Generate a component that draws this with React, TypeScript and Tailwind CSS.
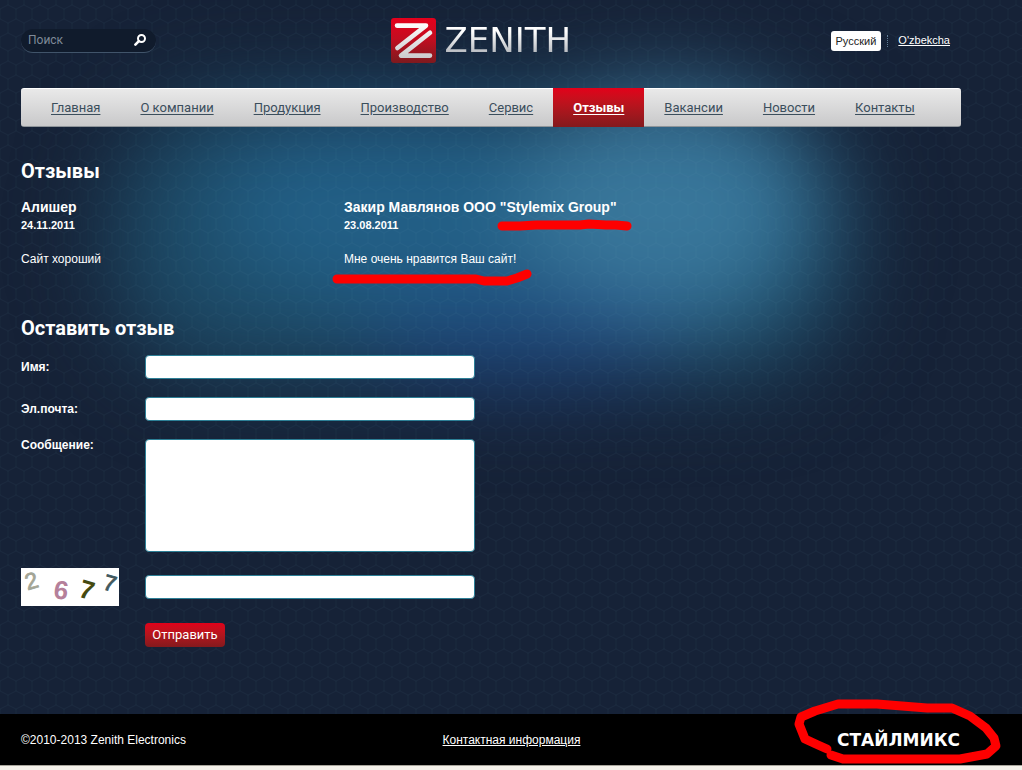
import React from 'react';

const NAV_ITEMS = [
  { label: 'Главная', active: false },
  { label: 'О компании', active: false },
  { label: 'Продукция', active: false },
  { label: 'Производство', active: false },
  { label: 'Сервис', active: false },
  { label: 'Отзывы', active: true },
  { label: 'Вакансии', active: false },
  { label: 'Новости', active: false },
  { label: 'Контакты', active: false },
];

const INPUT_CLASS =
  'w-full max-w-[330px] rounded-[4px] border border-[#2c7f96] bg-white px-2 text-xs text-gray-900 outline-none';

const Backdrop: React.FC = () => (
  <svg className="absolute inset-0 -z-10 h-full w-full" aria-hidden="true">
    <defs>
      <filter id="soft" x="-50%" y="-50%" width="200%" height="200%" colorInterpolationFilters="sRGB">
        <feGaussianBlur stdDeviation="46" />
      </filter>
      <pattern id="hex" width="16" height="28" patternUnits="userSpaceOnUse">
        <path
          d="M8 0V5L16 9V19L8 23V28M8 5L0 9V19L8 23"
          fill="none"
          stroke="#7fb4d0"
          strokeOpacity="0.05"
        />
      </pattern>
    </defs>
    <rect width="100%" height="100%" fill="#162237" />
    <g filter="url(#soft)">
      <rect x="110" y="98" width="740" height="280" rx="120" fill="#1d4a66" />
      <ellipse cx="410" cy="210" rx="200" ry="100" fill="#225f86" />
      <ellipse cx="665" cy="205" rx="150" ry="120" fill="#38769a" />
      <ellipse cx="520" cy="345" rx="160" ry="40" fill="#1e467c" />
    </g>
    <rect width="100%" height="100%" fill="url(#hex)" />
  </svg>
);

const Logo: React.FC = () => (
  <a href="#" className="flex w-[201px] items-center gap-[9px]">
    <svg className="h-[45px] w-[45px] shrink-0" viewBox="0 0 45 45" aria-hidden="true">
      <defs>
        <linearGradient id="mark" x1="0" y1="0" x2="0" y2="1">
          <stop offset="0" stopColor="#e4001c" />
          <stop offset="0.45" stopColor="#c40d20" />
          <stop offset="1" stopColor="#7d1a1e" />
        </linearGradient>
        <linearGradient id="silver" x1="0" y1="0" x2="0" y2="45" gradientUnits="userSpaceOnUse">
          <stop offset="0.1" stopColor="#ffffff" />
          <stop offset="1" stopColor="#c4c4c6" />
        </linearGradient>
      </defs>
      <rect width="45" height="45" rx="3" fill="url(#mark)" />
      <g fill="none" stroke="url(#silver)" strokeWidth="4.6" strokeLinecap="round" strokeLinejoin="round">
        <path d="M6 7.6H35L6.4 30" />
        <path d="M39 14.8L10 37.6H39" />
      </g>
    </svg>
    <span className="bg-linear-to-b from-white from-30% to-[#b4b8bd] to-80% bg-clip-text font-['DejaVu_Sans',sans-serif] text-[34px] leading-[45px] text-transparent">
      ZENITH
    </span>
  </a>
);

const Header: React.FC = () => (
  <header className="grid grid-cols-[1fr_auto_1fr] items-center pt-[18px] pb-[25px]">
    <form className="flex h-6 w-[135px] items-center rounded-full border-b border-[#41546a] bg-[#101b2c] pr-[10px] pl-[7px]">
      <input
        type="text"
        placeholder="Поиск"
        aria-label="Поиск"
        className="min-w-0 flex-1 bg-transparent font-[Roboto,sans-serif] text-xs text-white outline-none placeholder:text-[#7f8a98]"
      />
      <button type="button" aria-label="Найти">
        <svg className="h-3 w-3" viewBox="0 0 12 12" fill="none" stroke="#fff" aria-hidden="true">
          <circle cx="7.5" cy="4.5" r="3.5" strokeWidth="2" />
          <path d="M4.8 7.2L1.4 10.6" strokeWidth="2.6" strokeLinecap="round" />
        </svg>
      </button>
    </form>
    <Logo />
    <div className="flex items-center justify-end pr-[11px] text-[11px]">
      <a href="#" className="rounded-[3px] bg-white px-[5px] leading-5 text-[#222]">
        Русский
      </a>
      <span className="mr-[10px] ml-[6px] h-3 border-l border-dotted border-[#5f7d96]" />
      <a href="#" className="underline">
        O'zbekcha
      </a>
    </div>
  </header>
);

const Nav: React.FC = () => (
  <nav className="flex h-[39px] rounded-[3px] border-t border-b border-t-white border-b-[#8e9499] bg-linear-to-b from-[#e9e9e9] to-[#c9c9ca] pl-[10px] font-[Roboto,sans-serif] text-[13px]">
    {NAV_ITEMS.map((item) => (
      <a
        key={item.label}
        href="#"
        className={
          item.active
            ? '-my-px flex items-center bg-linear-to-b from-[#e2001a] to-[#84191d] px-5 font-bold whitespace-nowrap text-white underline underline-offset-2'
            : 'flex items-center px-5 whitespace-nowrap text-[#3b4e5c] underline underline-offset-2'
        }
      >
        {item.label}
      </a>
    ))}
  </nav>
);

const Reviews: React.FC = () => (
  <section className="mt-8">
    <h1 className="font-[Roboto,sans-serif] text-xl leading-6 font-bold">Отзывы</h1>
    <div className="mt-[15px] grid grid-cols-[323px_1fr] leading-[18px]">
      <article>
        <h2 className="text-sm leading-[18px] font-bold">Алишер</h2>
        <p className="text-[11px] leading-[18px] font-bold">24.11.2011</p>
        <p className="mt-4">Сайт хороший</p>
      </article>
      <article className="relative">
        <h2 className="text-sm leading-[18px] font-bold">Закир Мавлянов ООО "Stylemix Group"</h2>
        <p className="text-[11px] leading-[18px] font-bold">23.08.2011</p>
        <p className="mt-4">Мне очень нравится Ваш сайт!</p>
        <svg
          className="absolute top-0 -left-4 h-[92px] w-[310px]"
          viewBox="-16 0 310 92"
          fill="none"
          stroke="#fe0000"
          strokeWidth="9"
          strokeLinecap="round"
          strokeLinejoin="round"
          aria-hidden="true"
        >
          <path d="M158 28H176L192 27H236L245 26L262 27H272L283 28" />
          <path d="M-7 81H132L140 83H163L173 80L183 76" />
        </svg>
      </article>
    </div>
  </section>
);

const Captcha: React.FC = () => (
  <svg
    className="h-[38px] w-[98px] bg-white font-['Liberation_Sans',sans-serif] font-bold"
    viewBox="0 0 98 38"
    role="img"
    aria-label="2677"
  >
    <text x="4" y="21" fontSize="23" fontWeight="400" fill="#a3a596" stroke="#a3a596" strokeWidth="0.8" transform="rotate(-16 10 13)">2</text>
    <text x="33" y="31" fontSize="26" fill="#b5809a" transform="rotate(8 40 21)">6</text>
    <text x="59" y="31" fontSize="26" fill="#454a10" transform="rotate(16 67 21)">7</text>
    <text x="83" y="23" fontSize="22" fontWeight="400" fill="#42595f" stroke="#42595f" strokeWidth="1" transform="rotate(16 90 15)">7</text>
  </svg>
);

const FeedbackForm: React.FC = () => (
  <section className="mt-12">
    <h2 className="font-[Roboto,sans-serif] text-xl leading-6 font-bold">Оставить отзыв</h2>
    <form className="mt-[15px]">
      <div className="grid grid-cols-[124px_1fr] gap-y-[18px]">
        <label htmlFor="name" className="font-bold leading-6">
          Имя:
        </label>
        <input id="name" type="text" className={`h-6 ${INPUT_CLASS}`} />
        <label htmlFor="email" className="font-bold leading-6">
          Эл.почта:
        </label>
        <input id="email" type="email" className={`h-6 ${INPUT_CLASS}`} />
        <label htmlFor="message" className="font-bold leading-3">
          Сообщение:
        </label>
        <textarea id="message" className={`block h-[113px] resize-none py-1 ${INPUT_CLASS}`} />
      </div>
      <div className="mt-4 grid grid-cols-[124px_1fr] items-center">
        <label htmlFor="code">
          <Captcha />
        </label>
        <input id="code" type="text" className={`h-6 ${INPUT_CLASS}`} />
      </div>
      <button
        type="submit"
        className="mt-[17px] ml-[124px] h-6 w-20 rounded-[4px] bg-linear-to-b from-[#e2001a] to-[#84191d] font-[Roboto,sans-serif] text-[13px] text-white"
      >
        Отправить
      </button>
    </form>
  </section>
);

const Footer: React.FC = () => (
  <footer className="flex h-[51px] items-center justify-between bg-black pr-[61px] pl-[21px]">
    <span>©2010-2013 Zenith Electronics</span>
    <a href="#" className="underline">
      Контактная информация
    </a>
    <div className="relative w-[124px]">
      <a href="#" className="font-['DejaVu_Sans',sans-serif] text-[17px] leading-6 font-bold whitespace-nowrap">
        СТАЙЛМИКС
      </a>
      <svg
        className="pointer-events-none absolute -top-8 -left-12 h-[74px] w-[216px]"
        viewBox="789 695 216 74"
        fill="none"
        stroke="#fe0000"
        strokeWidth="9"
        strokeLinecap="round"
        strokeLinejoin="round"
        aria-hidden="true"
      >
        <path d="M827 748L818 744L805 738L799 723L801 716L815 710L838 703H877L927 707H952L970 715L986 727L994 737L996 745L987 753L960 758H843L831 754" />
      </svg>
    </div>
  </footer>
);

const App: React.FC = () => {
  return (
    <div className="relative isolate flex min-h-screen flex-col overflow-hidden bg-[#162237] font-['Liberation_Sans',Arial,sans-serif] text-xs text-white">
      <Backdrop />
      <div className="flex-1 pr-[61px] pb-10 pl-[21px]">
        <Header />
        <Nav />
        <main>
          <Reviews />
          <FeedbackForm />
        </main>
      </div>
      <Footer />
      <div className="h-[5px] border-t border-[#a9a69d] bg-[#f4f1ea]" />
    </div>
  );
};

export default App;
